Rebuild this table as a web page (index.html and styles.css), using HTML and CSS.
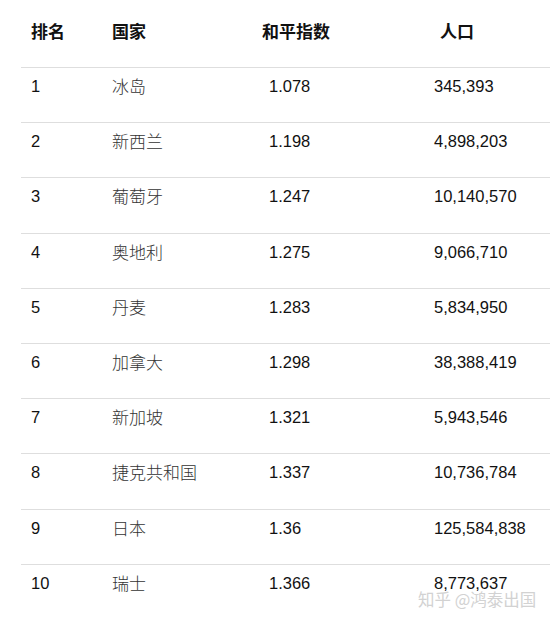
FILE: index.html
```html
<!DOCTYPE html>
<html lang="zh">
<head>
<meta charset="utf-8">
<link rel="stylesheet" href="styles.css">
</head>
<body>
<div class="page">
  <div class="table">
    <div class="row head">
      <div class="c c1">排名</div>
      <div class="c c2">国家</div>
      <div class="c c3">和平指数</div>
      <div class="c c4">人口</div>
    </div>
    <div class="row"><div class="c c1">1</div><div class="c c2">冰岛</div><div class="c c3">1.078</div><div class="c c4">345,393</div></div>
    <div class="row"><div class="c c1">2</div><div class="c c2">新西兰</div><div class="c c3">1.198</div><div class="c c4">4,898,203</div></div>
    <div class="row"><div class="c c1">3</div><div class="c c2">葡萄牙</div><div class="c c3">1.247</div><div class="c c4">10,140,570</div></div>
    <div class="row"><div class="c c1">4</div><div class="c c2">奥地利</div><div class="c c3">1.275</div><div class="c c4">9,066,710</div></div>
    <div class="row"><div class="c c1">5</div><div class="c c2">丹麦</div><div class="c c3">1.283</div><div class="c c4">5,834,950</div></div>
    <div class="row"><div class="c c1">6</div><div class="c c2">加拿大</div><div class="c c3">1.298</div><div class="c c4">38,388,419</div></div>
    <div class="row"><div class="c c1">7</div><div class="c c2">新加坡</div><div class="c c3">1.321</div><div class="c c4">5,943,546</div></div>
    <div class="row"><div class="c c1">8</div><div class="c c2">捷克共和国</div><div class="c c3">1.337</div><div class="c c4">10,736,784</div></div>
    <div class="row"><div class="c c1">9</div><div class="c c2">日本</div><div class="c c3">1.36</div><div class="c c4">125,584,838</div></div>
    <div class="row"><div class="c c1">10</div><div class="c c2">瑞士</div><div class="c c3">1.366</div><div class="c c4">8,773,637</div></div>
  </div>
  <div class="watermark">知乎 @鸿泰出国</div>
</div>
</body>
</html>
```
FILE: styles.css
```css
html, body {
  margin: 0;
  padding: 0;
  background: #fff;
}
.page {
  position: relative;
  width: 550px;
  height: 622px;
  overflow: hidden;
  font-family: "Liberation Sans", "Noto Sans CJK SC", sans-serif;
  color: #111;
}
.table {
  margin-left: 21px;
}
.row {
  display: grid;
  grid-template-columns: 81px 157px 165px 1fr;
  height: 55.2px;
  border-top: 1px solid #dedede;
  box-sizing: border-box;
  font-size: 16.5px;
}
.row.head {
  height: 67px;
  border-top: none;
  font-family: "Noto Sans CJK SC", sans-serif;
  font-weight: 700;
  font-size: 17px;
  color: #111;
  align-items: start;
  padding-top: 19px;
}
.c {
  padding-left: 10px;
  padding-top: 10px;
  line-height: 16px;
}
.head .c {
  padding-top: 0;
  line-height: 24px;
}
.head .c3 { padding-left: 3px; }
.head .c4 { padding-left: 16px; }
.c2 {
  font-family: "Noto Sans CJK SC", sans-serif;
  font-weight: 300;
  font-size: 17px;
  color: #333;
}
.head .c2 {
  font-weight: 700;
  color: #111;
}
.watermark {
  position: absolute;
  left: 418px;
  top: 591px;
  font-family: "Noto Sans CJK SC", sans-serif;
  font-size: 16.5px;
  line-height: 16px;
  color: #d2d2d2;
}
```
